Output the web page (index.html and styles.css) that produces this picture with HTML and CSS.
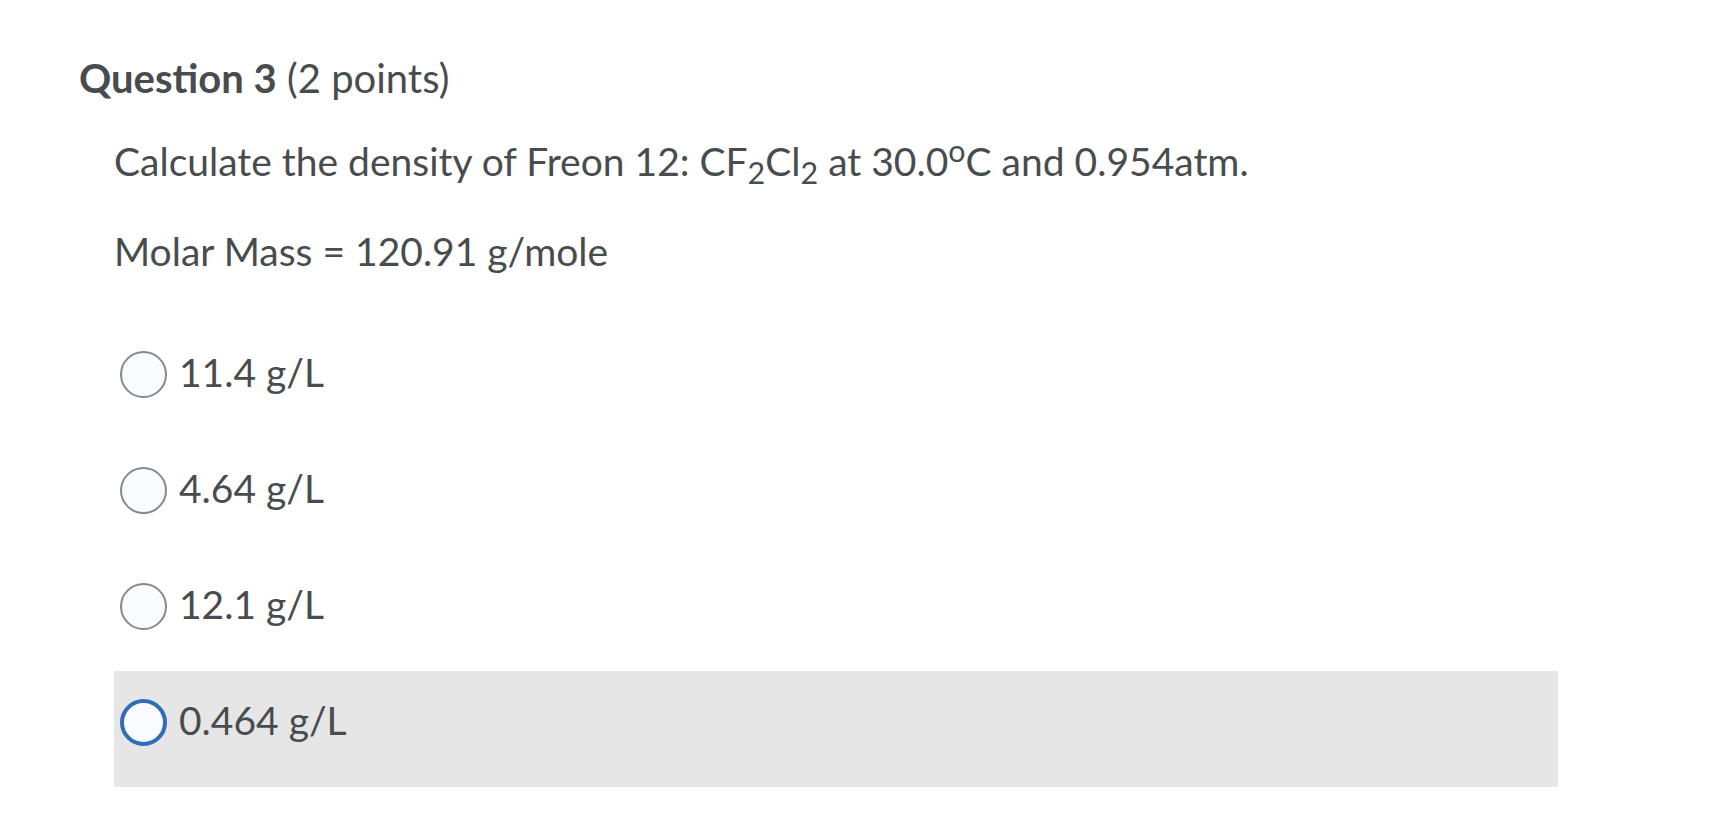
FILE: index.html
```html
<!DOCTYPE html>
<html>
<head>
<meta charset="utf-8">
<link rel="stylesheet" href="styles.css">
</head>
<body>
<div class="page">
  <h2 class="q-title"><span class="q-num">Question 3</span> (2 points)</h2>
  <div class="q-body">
    <p class="q-text">Calculate the density of Freon 12: CF<sub>2</sub>Cl<sub>2</sub> at 30.0<sup>o</sup>C and 0.954atm.</p>
    <p class="q-text q-text-2">Molar Mass = 120.91 g/mole</p>
    <div class="options">
      <label class="option"><span class="radio"></span><span class="opt-text">11.4 g/L</span></label>
      <label class="option"><span class="radio"></span><span class="opt-text">4.64 g/L</span></label>
      <label class="option"><span class="radio"></span><span class="opt-text">12.1 g/L</span></label>
      <label class="option option-active"><span class="radio radio-focus"></span><span class="opt-text">0.464 g/L</span></label>
    </div>
  </div>
</div>
</body>
</html>
```

FILE: styles.css
```css
html, body {
  margin: 0;
  padding: 0;
  background: #ffffff;
}
body {
  font-family: Lato, "Open Sans", sans-serif;
  color: #494c4e;
}
.page {
  padding: 54px 0 0 79px;
}
.q-title {
  margin: 0;
  font-size: 40px;
  line-height: 1.2;
  font-weight: 400;
}
.q-num {
  font-weight: 700;
}
.q-body {
  padding-left: 35px;
}
.q-text {
  margin: 36px 0 0 0;
  font-size: 39px;
  line-height: 1.2;
}
.q-text-2 {
  margin-top: 43px;
}
.q-text sub, .q-text sup {
  font-size: 0.78em;
  line-height: 0;
}
.q-text sub {
  vertical-align: -0.25em;
}
.q-text sup {
  vertical-align: 0.45em;
}
.options {
  margin-top: 48px;
  width: 1444px;
}
.option {
  display: flex;
  align-items: center;
  box-sizing: border-box;
  height: 116px;
  padding: 0 6px 12px 6px;
}
.option-active {
  background: #e6e6e6;
}
.radio {
  box-sizing: border-box;
  width: 47px;
  height: 47px;
  border-radius: 50%;
  border: 2px solid #878a8c;
  background: #f9fbff;
  flex: none;
}
.radio-focus {
  border: 4px solid #2f6dbb;
}
.opt-text {
  margin: 0 0 4px 12px;
  font-size: 39px;
  line-height: 1.2;
}
```
